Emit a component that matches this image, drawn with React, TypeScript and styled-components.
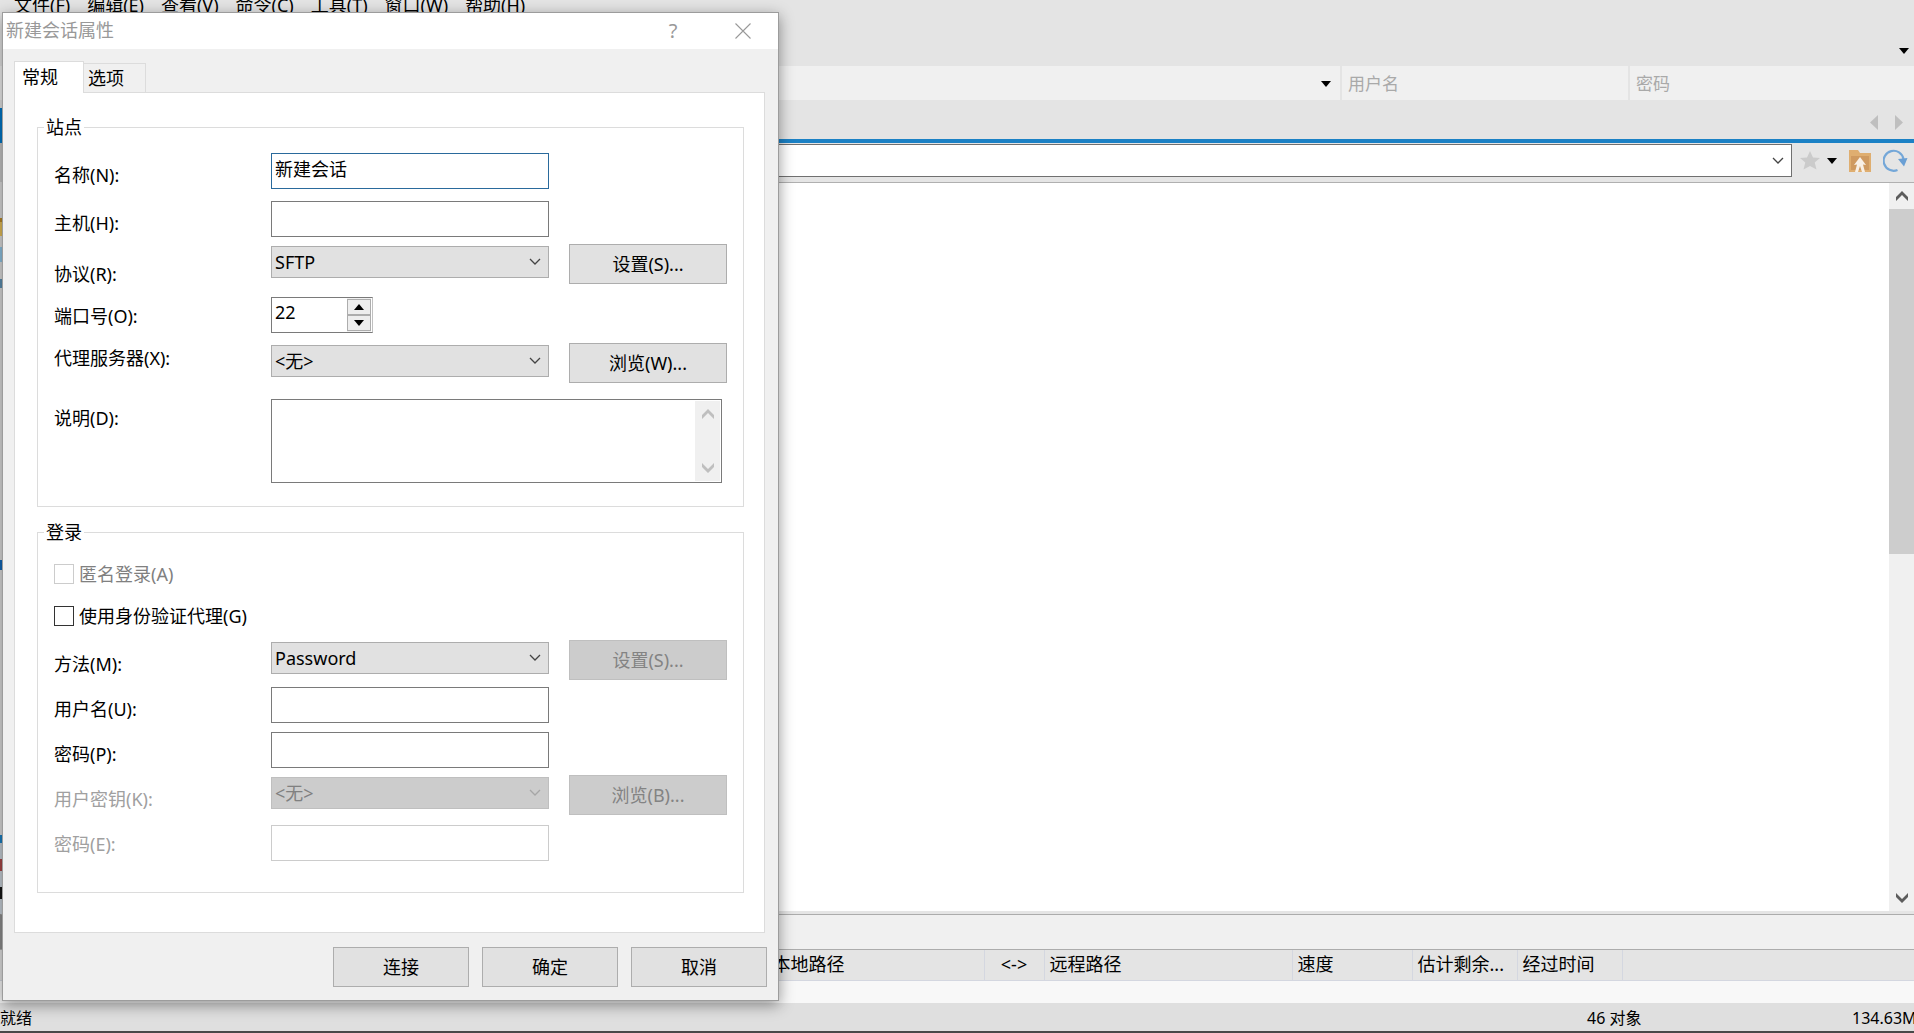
import React from "react";
import styled, { createGlobalStyle, css } from "styled-components";

const font = `"Noto Sans", "Noto Sans CJK SC", sans-serif`;

const GlobalStyle = createGlobalStyle`
  *, *::before, *::after { box-sizing: border-box; }
  html, body { margin: 0; height: 100%; overflow: hidden; }
  body { font: 18px/24px ${font}; color: #000; background: #e4e4e4; }
  input, select, textarea, button { font: inherit; color: inherit; margin: 0; border-radius: 0; }
`;

/* ---------- main window ---------- */

const Desktop = styled.div`
  position: relative;
  display: flex;
  flex-direction: column;
  height: 100vh;
  overflow: hidden;
`;

const MenuBar = styled.header`
  display: flex;
  flex-direction: column;
  justify-content: space-between;
  height: 66px;
  background: #e4e4e4;
`;

const Menu = styled.nav`
  display: flex;
  gap: 17px;
  margin-top: -7px;
  padding-left: 14px;
`;

const MenuItem = styled.button`
  border: 0;
  padding: 0;
  background: none;
  line-height: 24px;
`;

const IconButton = styled.button<{ $w?: number }>`
  display: flex;
  align-items: center;
  justify-content: center;
  flex: none;
  width: ${(p) => p.$w ?? 20}px;
  padding: 0;
  border: 0;
  background: none;
`;

const OverflowRow = styled.div`
  display: flex;
  justify-content: flex-end;
  padding-bottom: 12px;
`;

const SessionBar = styled.div`
  display: grid;
  grid-template-columns: 1fr 286px 284px;
  gap: 2px;
  height: 34px;
  background: #e4e4e4;
`;

const SessionCell = styled.div`
  display: flex;
  align-items: center;
  justify-content: flex-end;
  padding: 2px 4px 0 6px;
  background: #f0f0f0;
`;

const SessionInput = styled.input`
  flex: 1;
  min-width: 0;
  padding: 0;
  border: 0;
  outline: 0;
  background: none;
  font-size: 17px;
  &::placeholder { color: #a9a9a9; opacity: 1; }
`;

const TabBar = styled.div`
  display: flex;
  align-items: flex-end;
  justify-content: space-between;
  height: 39px;
  background: #e4e4e4;
`;

const ActiveTabEdge = styled.div`
  width: 2px;
  height: 31px;
  background: #0078c8;
`;

const TabScroll = styled.div`
  display: flex;
  gap: 5px;
  padding: 0 5px 9px 0;
`;

const Workspace = styled.main`
  display: flex;
  flex: 1;
  min-height: 0;
`;

const Rail = styled.div`
  display: flex;
  flex-direction: column;
  width: 2px;
  overflow: hidden;
`;

const RailMark = styled.div<{ $h: number; $c: string }>`
  flex: 0 0 ${(p) => p.$h}px;
  background: ${(p) => p.$c};
`;

const RemotePane = styled.section`
  display: flex;
  flex-direction: column;
  flex: 1;
  min-width: 0;
  border-top: 4px solid #1b81c5;
  background: #e5e5e5;
`;

const AddressBar = styled.div`
  display: flex;
  align-items: flex-start;
  height: 40px;
  padding-top: 1px;
  border-bottom: 1px solid #b0b0b0;
`;

const AddressBox = styled.div`
  display: flex;
  flex: 1;
  height: 33px;
  border: 1px solid #707070;
  background: #fff;
`;

const AddressInput = styled.input`
  flex: 1;
  min-width: 0;
  border: 0;
  outline: 0;
`;

const AddressTools = styled.div`
  display: flex;
  align-items: center;
  height: 33px;
  width: 122px;
  padding-left: 7px;
`;

const FileArea = styled.div`
  display: flex;
  justify-content: flex-end;
  flex: 1;
  min-height: 0;
  margin-bottom: 3px;
  background: #fff;
`;

const ScrollBar = styled.div`
  display: flex;
  flex-direction: column;
  justify-content: space-between;
  width: 25px;
  background: #f0f0f0;
`;

const ScrollTop = styled.div`
  height: 371px;
  display: flex;
  flex-direction: column;
`;

const ScrollButton = styled.button`
  display: flex;
  align-items: center;
  justify-content: center;
  height: 26px;
  padding: 0;
  border: 0;
  background: #f0f0f0;
`;

const ScrollThumb = styled.div`
  flex: 1;
  background: #cdcdcd;
`;

const TransferTabs = styled.div`
  height: 35px;
  border-top: 1px solid #acacac;
  border-left: 2px solid #8e8e8e;
  background: #f0f0f0;
`;

const TransferArea = styled.div`
  height: 54px;
  border-top: 1px solid #acacac;
  background: #f8f8f8;
`;

const TransferTable = styled.table`
  width: 100%;
  table-layout: fixed;
  border-collapse: collapse;
  background: #e4e4e4;
`;

const Th = styled.th<{ $w?: number; $align?: string }>`
  width: ${(p) => (p.$w ? `${p.$w}px` : "auto")};
  height: 30px;
  padding: 0 5px;
  border-right: 1px solid #d4d7e0;
  border-bottom: 1px solid #d4d7e0;
  font-weight: 400;
  line-height: 29px;
  text-align: ${(p) => p.$align ?? "left"};
  white-space: nowrap;
  overflow: hidden;
  &:last-child { border-right: 0; }
`;

const StatusBar = styled.footer`
  display: grid;
  grid-template-columns: 1fr 265px 62px;
  height: 30px;
  border-bottom: 2px solid #484848;
  background: #dfdfdf;
  font-size: 16px;
  line-height: 30px;
  white-space: nowrap;
`;

/* ---------- dialog ---------- */

const Dialog = styled.div`
  position: absolute;
  left: 2px;
  top: 12px;
  width: 777px;
  border: 1px solid #9c9c9c;
  background: #f0f0f0;
  box-shadow: 0 4px 14px rgba(0, 0, 0, 0.42);
`;

const TitleBar = styled.div`
  display: flex;
  align-items: center;
  height: 36px;
  padding-left: 3px;
  padding-right: 7px;
  background: #fff;
  color: #999;
`;

const Title = styled.h1`
  flex: 1;
  margin: 0;
  font-size: 18px;
  font-weight: 400;
  line-height: 32px;
  padding-bottom: 2px;
`;

const HelpButton = styled(IconButton)`
  font-size: 20px;
`;

const DialogBody = styled.div`
  padding: 12px 13px 0 11px;
`;

const Tabs = styled.div`
  display: flex;
  align-items: flex-end;
`;

const Tab = styled.button<{ $active?: boolean }>`
  padding: 0;
  border: 1px solid #dcdcdc;
  text-align: left;
  ${(p) =>
    p.$active
      ? css`
          z-index: 1;
          width: 70px;
          height: 32px;
          margin-bottom: -1px;
          padding-left: 7px;
          padding-bottom: 2px;
          border-bottom: 0;
          background: #fff;
        `
      : css`
          width: 62px;
          height: 29px;
          padding-left: 4px;
          border-left: 0;
          border-bottom: 0;
          background: #f0f0f0;
        `}
`;

const Panel = styled.div`
  padding: 22px 20px 39px 22px;
  border: 1px solid #dcdcdc;
  background: #fff;
`;

const Group = styled.fieldset`
  min-width: 0;
  margin: 0 0 13px;
  padding: 9px 16px 21px;
  border: 1px solid #dcdcdc;
  &:last-child { margin-bottom: 0; }
`;

const Legend = styled.legend`
  margin-left: -10px;
  padding: 0 2px;
  line-height: 24px;
`;

const Rows = styled.div`
  padding-top: 3px;
`;

/* $band is the height of the strip the label is centred in. */
const Row = styled.div<{ $h: number; $band?: number }>`
  display: flex;
  align-items: flex-start;
  height: ${(p) => p.$h}px;
  & > label:first-child { line-height: ${(p) => p.$band ?? 48}px; }
`;

const Label = styled.label<{ $off?: boolean }>`
  flex: none;
  width: 217px;
  color: ${(p) => (p.$off ? "#a0a0a0" : "#000")};
`;

const TextBox = styled.input`
  width: 278px;
  height: 36px;
  margin-top: 2px;
  padding: 0 3px 6px;
  border: 1px solid #7a7a7a;
  outline: 0;
  background: #fff;
  &:focus { border-color: #2a6a9c; }
  &:disabled { border-color: #ccc; }
`;

const SelectWrap = styled.div`
  display: grid;
  align-items: center;
  width: 278px;
  margin-top: 2px;
  margin-right: 20px;
  & > * { grid-area: 1 / 1; }
  & > svg { justify-self: end; margin-right: 8px; pointer-events: none; }
`;

const SelectBox = styled.select`
  appearance: none;
  width: 100%;
  height: 32px;
  padding: 0 24px 0 3px;
  border: 1px solid #adadad;
  outline: 0;
  background: #e1e1e1;
  &:disabled { background: #ccc; border-color: #bfbfbf; color: #808080; opacity: 1; }
`;

const PushButton = styled.button<{ $w: number }>`
  width: ${(p) => p.$w}px;
  height: 40px;
  padding: 0;
  border: 1px solid #adadad;
  background: #e1e1e1;
  &:disabled { background: #ccc; border-color: #bfbfbf; color: #838383; }
`;

const NumberBox = styled.div`
  display: flex;
  width: 102px;
  height: 36px;
  margin-top: 2px;
  padding-right: 1px;
  border: 1px solid #7a7a7a;
  border-right-color: #c0c0c0;
  background: #fff;
`;

const NumberInput = styled.input`
  flex: 1;
  min-width: 0;
  padding: 0 3px 6px;
  border: 0;
  outline: 0;
  background: none;
  appearance: textfield;
  &::-webkit-inner-spin-button { appearance: none; }
`;

const Spinner = styled.div`
  display: grid;
  grid-template-rows: 1fr 1fr;
  width: 24px;
  padding: 1px 0;
  background: #f0f0f0;
`;

const SpinButton = styled.button`
  display: flex;
  align-items: center;
  justify-content: center;
  padding: 0;
  border: 1px solid #adadad;
  background: #eee;
`;

const MemoFrame = styled.div`
  display: flex;
  width: 451px;
  height: 84px;
  margin-top: 2px;
  padding: 1px;
  border: 1px solid #7a7a7a;
  background: #fff;
`;

const Memo = styled.textarea`
  flex: 1;
  min-width: 0;
  padding: 2px;
  border: 0;
  outline: 0;
  resize: none;
`;

const CheckRow = styled.label<{ $off?: boolean }>`
  display: flex;
  align-items: center;
  gap: 5px;
  height: 42px;
  color: ${(p) => (p.$off ? "#808080" : "#000")};
`;

const CheckBox = styled.input`
  appearance: none;
  width: 20px;
  height: 20px;
  border: 1px solid #333;
  background: #fff;
  &:disabled { border-color: #ccc; }
`;

const Actions = styled.div`
  display: flex;
  justify-content: flex-end;
  gap: 13px;
  padding: 14px 11px 13px;
`;

/* ---------- drawings ---------- */

const Caret = ({ up = false }: { up?: boolean }) => (
  <svg width="10" height="6" viewBox="0 0 10 6">
    <path d={up ? "M0 6h10L5 0z" : "M0 0h10L5 6z"} fill="#000" />
  </svg>
);

const ThinChevron = ({ color = "#444" }: { color?: string }) => (
  <svg width="12" height="8" viewBox="0 0 12 8" fill="none" stroke={color} strokeWidth="1.3">
    <path d="M1 1l5 5 5-5" />
  </svg>
);

const BoldChevron = ({ up = false, color }: { up?: boolean; color: string }) => (
  <svg width="12" height="10" viewBox="0 0 12 10" fill={color}>
    <path d={up ? "M6 0l6 6v4L6 4 0 10V6z" : "M6 10l6-6V0L6 6 0 0v4z"} />
  </svg>
);

const TabArrow = ({ right = false }: { right?: boolean }) => (
  <svg width="8" height="15" viewBox="0 0 8 15" fill="#bfbfbf">
    <path d={right ? "M0 0v15l8-7.5z" : "M8 0v15L0 7.5z"} />
  </svg>
);

const StarIcon = () => (
  <svg width="20" height="20" viewBox="0 0 20 20" fill="#cbcbcb">
    <path d="M10 0l3 6.500 7 .5-5.300 4.500 1.800 7L10 15l-6.500 3.500 1.800-7L0 7l7-.5z" />
  </svg>
);

const FolderUpIcon = () => (
  <svg width="22" height="22" viewBox="0 0 22 22">
    <path d="M0 0h9l2 3h11v19H0z" fill="#dfae70" />
    <path d="M2 6h18v14H2z" fill="#cf9a60" />
    <path d="M11 7l6 8-3-.5 2 7.500h-3l-2-6-2 6H6l2-7.500-3 .5z" fill="#f8f0e6" />
  </svg>
);

const RefreshIcon = () => (
  <svg width="25" height="25" viewBox="0 0 25 25">
    <path d="M14.500 22A10 10 0 1 1 20.500 11" fill="none" stroke="#74a7d8" strokeWidth="2.200" />
    <path d="M15 11l9.500-1-3.500 8.500z" fill="#6a9fd4" />
  </svg>
);

const CloseIcon = () => (
  <svg width="16" height="16" viewBox="0 0 16 16" stroke="#999" strokeWidth="1.1">
    <path d="M.5.5l15 15M15.500.5l-15 15" />
  </svg>
);

/* ---------- data ---------- */

const menus = ["文件(F)", "编辑(E)", "查看(V)", "命令(C)", "工具(T)", "窗口(W)", "帮助(H)"];

const railMarks: [number, string][] = [
  [4, "#0078c8"],
  [39, "#c6c6c6"],
  [36, "#dcdcdc"],
  [4, "#b8892a"],
  [14, "#e3bd58"],
  [11, "#dcdcdc"],
  [15, "#8fc3e2"],
  [17, "#dcdcdc"],
  [9, "#5d8fb0"],
  [272, "#dcdcdc"],
  [10, "#1268b8"],
  [265, "#dcdcdc"],
  [8, "#1b7fc3"],
  [16, "#c8d0d8"],
  [12, "#a84848"],
  [16, "#c8d0d8"],
  [12, "#161616"],
  [15, "#c8d0d8"],
];

const columns: { text: string; w?: number; align?: string }[] = [
  { text: "", w: 767 },
  { text: "本地路径", w: 217 },
  { text: "<->", w: 60, align: "center" },
  { text: "远程路径", w: 248 },
  { text: "速度", w: 120 },
  { text: "估计剩余...", w: 105 },
  { text: "经过时间", w: 105 },
  { text: "" },
];

/* ---------- form parts ---------- */

type PickProps = { id: string; value: string; disabled?: boolean };

const Pick = ({ id, value, disabled }: PickProps) => (
  <SelectWrap>
    <SelectBox id={id} disabled={disabled} defaultValue={value}>
      <option>{value}</option>
    </SelectBox>
    <ThinChevron color={disabled ? "#a6a6a6" : "#444"} />
  </SelectWrap>
);

const SessionDialog = () => (
  <Dialog role="dialog" aria-labelledby="dialog-title">
    <TitleBar>
      <Title id="dialog-title">新建会话属性</Title>
      <HelpButton $w={84} aria-label="帮助">?</HelpButton>
      <IconButton $w={56} aria-label="关闭">
        <CloseIcon />
      </IconButton>
    </TitleBar>
    <DialogBody>
      <Tabs role="tablist">
        <Tab role="tab" aria-selected $active>常规</Tab>
        <Tab role="tab">选项</Tab>
      </Tabs>
      <Panel>
        <Group>
          <Legend>站点</Legend>
          <Rows>
            <Row $h={48}>
              <Label htmlFor="name">名称(N):</Label>
              <TextBox id="name" defaultValue="新建会话" autoFocus />
            </Row>
            <Row $h={45}>
              <Label htmlFor="host">主机(H):</Label>
              <TextBox id="host" />
            </Row>
            <Row $h={51} $band={60}>
              <Label htmlFor="protocol">协议(R):</Label>
              <Pick id="protocol" value="SFTP" />
              <PushButton $w={158}>设置(S)...</PushButton>
            </Row>
            <Row $h={48} $band={42}>
              <Label htmlFor="port">端口号(O):</Label>
              <NumberBox>
                <NumberInput id="port" type="number" defaultValue={22} />
                <Spinner>
                  <SpinButton aria-label="增加"><Caret up /></SpinButton>
                  <SpinButton aria-label="减少"><Caret /></SpinButton>
                </Spinner>
              </NumberBox>
            </Row>
            <Row $h={54} $band={30}>
              <Label htmlFor="proxy">代理服务器(X):</Label>
              <Pick id="proxy" value="<无>" />
              <PushButton $w={158}>浏览(W)...</PushButton>
            </Row>
            <Row $h={88} $band={42}>
              <Label htmlFor="memo">说明(D):</Label>
              <MemoFrame>
                <Memo id="memo" />
                <ScrollBar>
                  <ScrollButton aria-label="向上滚动"><BoldChevron up color="#bfbfbf" /></ScrollButton>
                  <ScrollButton aria-label="向下滚动"><BoldChevron color="#bfbfbf" /></ScrollButton>
                </ScrollBar>
              </MemoFrame>
            </Row>
          </Rows>
        </Group>
        <Group>
          <Legend>登录</Legend>
          <CheckRow $off>
            <CheckBox type="checkbox" disabled />
            匿名登录(A)
          </CheckRow>
          <CheckRow>
            <CheckBox type="checkbox" />
            使用身份验证代理(G)
          </CheckRow>
          <Rows>
            <Row $h={45}>
              <Label htmlFor="method">方法(M):</Label>
              <Pick id="method" value="Password" />
              <PushButton $w={158} disabled>设置(S)...</PushButton>
            </Row>
            <Row $h={45}>
              <Label htmlFor="user">用户名(U):</Label>
              <TextBox id="user" />
            </Row>
            <Row $h={45}>
              <Label htmlFor="password">密码(P):</Label>
              <TextBox id="password" type="password" />
            </Row>
            <Row $h={48}>
              <Label htmlFor="key" $off>用户密钥(K):</Label>
              <Pick id="key" value="<无>" disabled />
              <PushButton $w={158} disabled>浏览(B)...</PushButton>
            </Row>
            <Row $h={48} $band={42}>
              <Label htmlFor="passphrase" $off>密码(E):</Label>
              <TextBox id="passphrase" type="password" disabled />
            </Row>
          </Rows>
        </Group>
      </Panel>
    </DialogBody>
    <Actions>
      <PushButton $w={136}>连接</PushButton>
      <PushButton $w={136}>确定</PushButton>
      <PushButton $w={136}>取消</PushButton>
    </Actions>
  </Dialog>
);

export default function App() {
  return (
    <>
      <GlobalStyle />
      <Desktop>
        <MenuBar>
          <Menu>
            {menus.map((m) => (
              <MenuItem key={m}>{m}</MenuItem>
            ))}
          </Menu>
          <OverflowRow>
            <IconButton aria-label="更多"><Caret /></IconButton>
          </OverflowRow>
        </MenuBar>
        <SessionBar>
          <SessionCell>
            <IconButton aria-label="历史"><Caret /></IconButton>
          </SessionCell>
          <SessionCell>
            <SessionInput placeholder="用户名" aria-label="用户名" />
          </SessionCell>
          <SessionCell>
            <SessionInput placeholder="密码" aria-label="密码" type="password" />
          </SessionCell>
        </SessionBar>
        <TabBar>
          <ActiveTabEdge />
          <TabScroll>
            <IconButton aria-label="上一个"><TabArrow /></IconButton>
            <IconButton aria-label="下一个"><TabArrow right /></IconButton>
          </TabScroll>
        </TabBar>
        <Workspace>
          <Rail>
            {railMarks.map(([h, c], i) => (
              <RailMark key={i} $h={h} $c={c} />
            ))}
          </Rail>
          <RemotePane>
            <AddressBar>
              <AddressBox>
                <AddressInput aria-label="地址" />
                <IconButton $w={26} aria-label="展开"><ThinChevron /></IconButton>
              </AddressBox>
              <AddressTools>
                <IconButton $w={22} aria-label="收藏"><StarIcon /></IconButton>
                <IconButton $w={22} aria-label="收藏列表"><Caret /></IconButton>
                <IconButton $w={34} aria-label="上一级"><FolderUpIcon /></IconButton>
                <IconButton $w={37} aria-label="刷新"><RefreshIcon /></IconButton>
              </AddressTools>
            </AddressBar>
            <FileArea>
              <ScrollBar>
                <ScrollTop>
                  <ScrollButton aria-label="向上滚动"><BoldChevron up color="#5c5c5c" /></ScrollButton>
                  <ScrollThumb />
                </ScrollTop>
                <ScrollButton aria-label="向下滚动"><BoldChevron color="#5c5c5c" /></ScrollButton>
              </ScrollBar>
            </FileArea>
          </RemotePane>
        </Workspace>
        <TransferTabs />
        <TransferArea>
          <TransferTable>
            <thead>
              <tr>
                {columns.map((c, i) => (
                  <Th key={i} $w={c.w} $align={c.align}>{c.text}</Th>
                ))}
              </tr>
            </thead>
          </TransferTable>
        </TransferArea>
        <StatusBar>
          <span>就绪</span>
          <span>46 对象</span>
          <span>134.63M</span>
        </StatusBar>
        <SessionDialog />
      </Desktop>
    </>
  );
}
